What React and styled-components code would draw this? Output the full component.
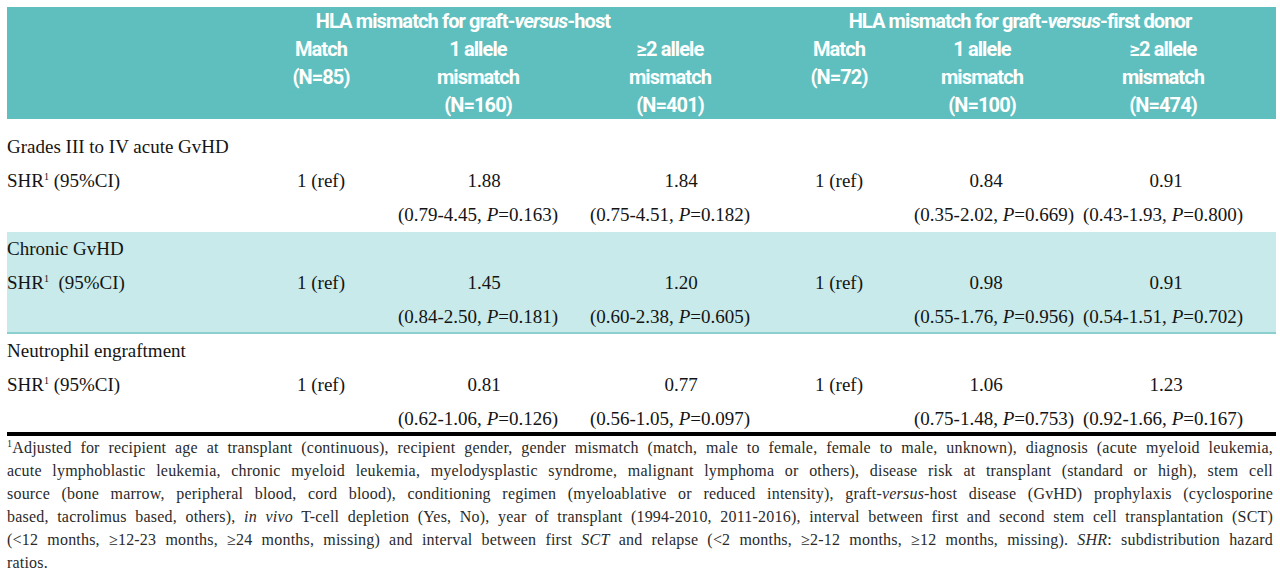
import React from 'react';
import styled, { createGlobalStyle } from 'styled-components';

const GlobalStyle = createGlobalStyle`
  html, body {
    margin: 0;
    padding: 0;
    background: #ffffff;
  }
  body {
    font-family: "Liberation Serif", "Times New Roman", serif;
    color: #141414;
  }
`;

const COLS = '255px 118px 196px 188px 150px 136px 226px';

const Page = styled.div`
  width: 1269px;
  padding: 7px 0 0 7px;
`;

const Header = styled.div`
  display: grid;
  grid-template-columns: ${COLS};
  grid-template-rows: repeat(4, 28px);
  background: #5fbfbe;
  color: #ffffff;
  font-family: Roboto, "Liberation Sans", sans-serif;
  font-weight: 700;
  font-size: 20px;
  line-height: 28px;
  letter-spacing: -0.9px;
`;

const GroupTitle = styled.div`
  grid-row: 1;
  grid-column: ${(p) => p.$span};
  text-align: center;
  padding-right: ${(p) => p.$pushLeft || 0}px;
  white-space: nowrap;
`;

const ColHead = styled.div`
  grid-row: 2 / span 3;
  grid-column: ${(p) => p.$col};
  text-align: center;
  white-space: nowrap;
`;

const Line = styled.div``;

const Body = styled.div`
  padding-top: 11px;
  border-bottom: 4px solid #000;
`;

const Section = styled.div`
  display: grid;
  grid-template-columns: ${COLS};
  grid-template-rows: 34px 34px ${(p) => (p.$last ? 30 : 34)}px;
  line-height: 34px;
  font-size: 19px;
  background: ${(p) => (p.$shaded ? '#c8eaea' : 'transparent')};
  box-shadow: ${(p) => (p.$shaded ? 'inset 0 -2px 0 #8ccfcf' : 'none')};
`;

const Label = styled.div`
  grid-column: 1 / -1;
  white-space: nowrap;
`;

const RowLabel = styled.div`
  grid-column: 1;
  white-space: nowrap;
`;

const Value = styled.div`
  text-align: center;
  white-space: nowrap;
  padding-left: ${(p) => (p.$shift || 0) * 2}px;
`;

const Ci = styled.div`
  text-align: center;
  white-space: nowrap;
  grid-row: 3;
  grid-column: ${(p) => p.$col};
`;

const Sup = styled.sup`
  font-size: 10px;
  vertical-align: top;
  line-height: 26px;
`;

const Footnote = styled.div`
  font-family: "Liberation Serif", "Times New Roman", serif;
  font-size: 16px;
  letter-spacing: 0.2px;
  line-height: 23px;
  color: #2a2a2a;
  width: 1266px;
`;

const FootLine = styled.div`
  text-align: justify;
  text-align-last: ${(p) => (p.$last ? 'left' : 'justify')};
  white-space: nowrap;
`;

const FootSup = styled.span`
  font-size: 10px;
  vertical-align: top;
  line-height: 16px;
`;

const SHIFTS = [0, 6, 11, 0, 4, 3];

const sections = [
  {
    title: 'Grades III to IV acute GvHD',
    values: ['1.88', '1.84', '0.84', '0.91'],
    cis: ['(0.79-4.45, ', '0.163)', '(0.75-4.51, ', '0.182)', '(0.35-2.02, ', '0.669)', '(0.43-1.93, ', '0.800)'],
  },
  {
    title: 'Chronic GvHD',
    values: ['1.45', '1.20', '0.98', '0.91'],
    cis: ['(0.84-2.50, ', '0.181)', '(0.60-2.38, ', '0.605)', '(0.55-1.76, ', '0.956)', '(0.54-1.51, ', '0.702)'],
    shaded: true,
    wideLabel: true,
  },
  {
    title: 'Neutrophil engraftment',
    values: ['0.81', '0.77', '1.06', '1.23'],
    cis: ['(0.62-1.06, ', '0.126)', '(0.56-1.05, ', '0.097)', '(0.75-1.48, ', '0.753)', '(0.92-1.66, ', '0.167)'],
    last: true,
  },
];

const ciCols = [3, 4, 6, 7];

function Block({ s }) {
  return (
    <Section $shaded={s.shaded} $last={s.last}>
      <Label>{s.title}</Label>
      <RowLabel>
        SHR<Sup>1</Sup>{s.wideLabel ? '\u00a0\u00a0' : ' '}(95%CI)
      </RowLabel>
      <Value>1 (ref)</Value>
      <Value $shift={SHIFTS[1]}>{s.values[0]}</Value>
      <Value $shift={SHIFTS[2]}>{s.values[1]}</Value>
      <Value>1 (ref)</Value>
      <Value $shift={SHIFTS[4]}>{s.values[2]}</Value>
      <Value $shift={SHIFTS[5]}>{s.values[3]}</Value>
      {ciCols.map((c, i) => (
        <Ci key={c} $col={c}>
          {s.cis[i * 2]}
          <i>P</i>={s.cis[i * 2 + 1]}
        </Ci>
      ))}
    </Section>
  );
}

export default function App() {
  return (
    <Page>
      <GlobalStyle />
      <Header>
        <GroupTitle $span="2 / span 3" $pushLeft={100}>
          HLA mismatch for graft-<i>versus</i>-host
        </GroupTitle>
        <GroupTitle $span="5 / span 3">
          HLA mismatch for graft-<i>versus</i>-first donor
        </GroupTitle>
        <ColHead $col={2}>
          <Line>Match</Line>
          <Line>(N=85)</Line>
        </ColHead>
        <ColHead $col={3}>
          <Line>1 allele</Line>
          <Line>mismatch</Line>
          <Line>(N=160)</Line>
        </ColHead>
        <ColHead $col={4}>
          <Line>≥2 allele</Line>
          <Line>mismatch</Line>
          <Line>(N=401)</Line>
        </ColHead>
        <ColHead $col={5}>
          <Line>Match</Line>
          <Line>(N=72)</Line>
        </ColHead>
        <ColHead $col={6}>
          <Line>1 allele</Line>
          <Line>mismatch</Line>
          <Line>(N=100)</Line>
        </ColHead>
        <ColHead $col={7}>
          <Line>≥2 allele</Line>
          <Line>mismatch</Line>
          <Line>(N=474)</Line>
        </ColHead>
      </Header>

      <Body>
        {sections.map((s) => (
          <Block key={s.title} s={s} />
        ))}
      </Body>

      <Footnote>
        <FootLine>
          <FootSup>1</FootSup>Adjusted for recipient age at transplant (continuous), recipient gender, gender mismatch (match, male to female, female to male, unknown), diagnosis (acute myeloid leukemia,
        </FootLine>
        <FootLine>
          acute lymphoblastic leukemia, chronic myeloid leukemia, myelodysplastic syndrome, malignant lymphoma or others), disease risk at transplant (standard or high), stem cell
        </FootLine>
        <FootLine>
          source (bone marrow, peripheral blood, cord blood), conditioning regimen (myeloablative or reduced intensity), graft-<i>versus</i>-host disease (GvHD) prophylaxis (cyclosporine
        </FootLine>
        <FootLine>
          based, tacrolimus based, others), <i>in vivo</i> T-cell depletion (Yes, No), year of transplant (1994-2010, 2011-2016), interval between first and second stem cell transplantation (SCT)
        </FootLine>
        <FootLine>
          (&lt;12 months, ≥12-23 months, ≥24 months, missing) and interval between first <i>SCT</i> and relapse (&lt;2 months, ≥2-12 months, ≥12 months, missing). <i>SHR</i>: subdistribution hazard
        </FootLine>
        <FootLine $last>ratios.</FootLine>
      </Footnote>
    </Page>
  );
}
